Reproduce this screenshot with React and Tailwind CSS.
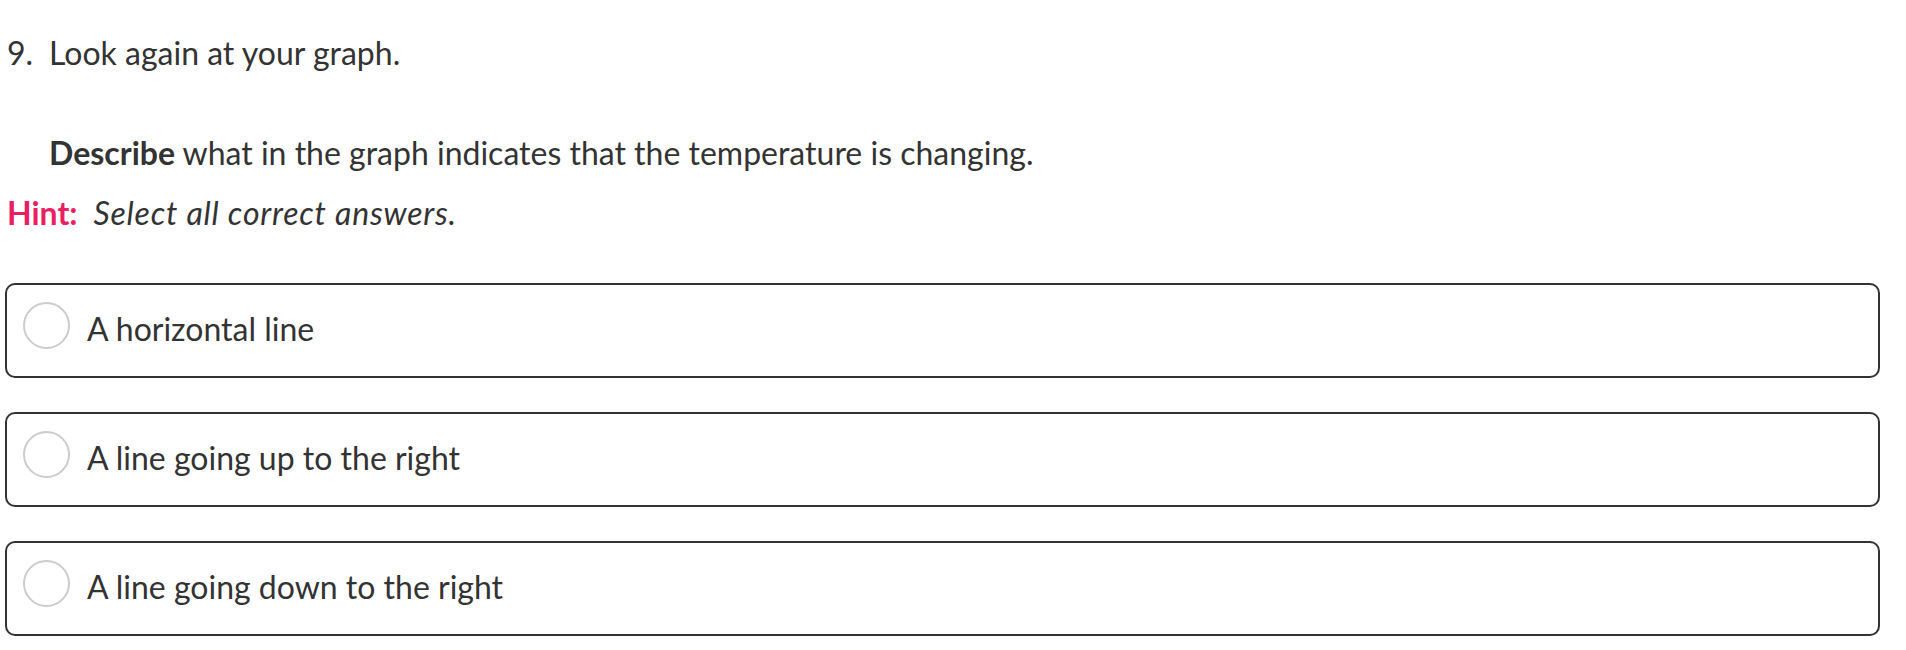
import React from 'react';

const options = ['A horizontal line', 'A line going up to the right', 'A line going down to the right'];

const Option = ({ label }) => (
  <label className="flex items-center h-[95px] border-2 border-[#333] rounded-[10px] pl-[16px] cursor-pointer">
    <span className="w-[47px] h-[47px] rounded-full border-2 border-[#ccc] shrink-0 -mt-[10px]" />
    <span className="ml-[17px] text-[32px] leading-[36px] text-[#333] -mt-[4px]">{label}</span>
  </label>
);

export default function App() {
  return (
    <div className="bg-white min-h-screen font-['Lato','Noto_Sans',sans-serif] text-[#333] pl-[5px] pr-[26px] pt-[35px]">
      <div className="pl-[2px] text-[32px] leading-[36px] flex">
        <span className="w-[42px]">9.</span>
        <span>Look again at your graph.</span>
      </div>

      <p className="mt-[64px] pl-[44px] text-[32px] leading-[36px]">
        <span className="font-bold">Describe</span> what in the graph indicates that the temperature is changing.
      </p>

      <p className="mt-[24px] pl-[2px] text-[32px] leading-[36px]">
        <span className="font-bold text-[#e91e63]">Hint:</span>
        <span className="italic ml-[16px] tracking-[0.8px]">Select all correct answers.</span>
      </p>

      <div className="mt-[52px] flex flex-col gap-[34px]">
        {options.map(o => <Option key={o} label={o} />)}
      </div>
    </div>
  );
}
